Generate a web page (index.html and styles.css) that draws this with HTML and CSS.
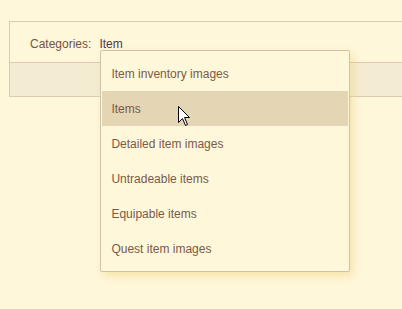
FILE: index.html
```html
<!DOCTYPE html>
<html lang="en">
<head>
<meta charset="UTF-8">
<title>Categories</title>
<link rel="stylesheet" href="styles.css">
</head>
<body>

<div class="panel">
  <div class="cat-row">
    <span class="cat-label">Categories:</span>
    <span class="cat-current">Item
      <ul class="menu">
        <li>Item inventory images</li>
        <li class="active">Items</li>
        <li>Detailed item images</li>
        <li>Untradeable items</li>
        <li>Equipable items</li>
        <li>Quest item images</li>
      </ul>
    </span>
  </div>
  <div class="strip"></div>
</div>

<svg class="cursor" width="13" height="20" viewBox="0 0 13 20">
  <path d="M0.5 0.5 L0.5 16.5 L4.5 12.5 L7.5 19.5 L9.5 18.5 L6.5 11.5 L11.5 11.5 Z" fill="#fff" stroke="#000" stroke-width="1"/>
</svg>

</body>
</html>
```

FILE: styles.css
```css
html, body {
  height: 100%;
}
body {
  margin: 0;
  background-color: #fef7da;
  font-family: "Liberation Sans", Arial, sans-serif;
  font-size: 12px;
}
.panel {
  margin: 21px 0 0 9px;
  border: 1px solid #dccbb4;
  border-right: none;
}
.cat-row {
  height: 41px;
  display: flex;
  align-items: center;
  padding-left: 20px;
  padding-top: 3px;
  box-sizing: border-box;
  border-bottom: 1px solid #dccbb4;
  color: #735443;
}
.cat-label {
  margin-right: 8px;
}
.cat-current {
  position: relative;
  color: #4f3848;
}
.strip {
  height: 33px;
  background-color: #f4ecd2;
}
.menu {
  position: absolute;
  left: 1px;
  top: 13px;
  width: 246px;
  margin: 0;
  padding: 5px 1px 5px 1px;
  list-style: none;
  background-color: #fef7da;
  border: 1px solid #cdc3a9;
  border-radius: 2px;
  box-shadow: 3px 4px 8px rgba(240, 205, 110, 0.45);
  z-index: 2;
}
.menu li {
  height: 34px;
  line-height: 34px;
  padding-top: 1px;
  padding-left: 9px;
  color: #7a5a49;
}
.menu li.active {
  background-color: #e4d5b4;
}
.cursor {
  position: absolute;
  left: 178px;
  top: 106px;
  z-index: 5;
}
```
